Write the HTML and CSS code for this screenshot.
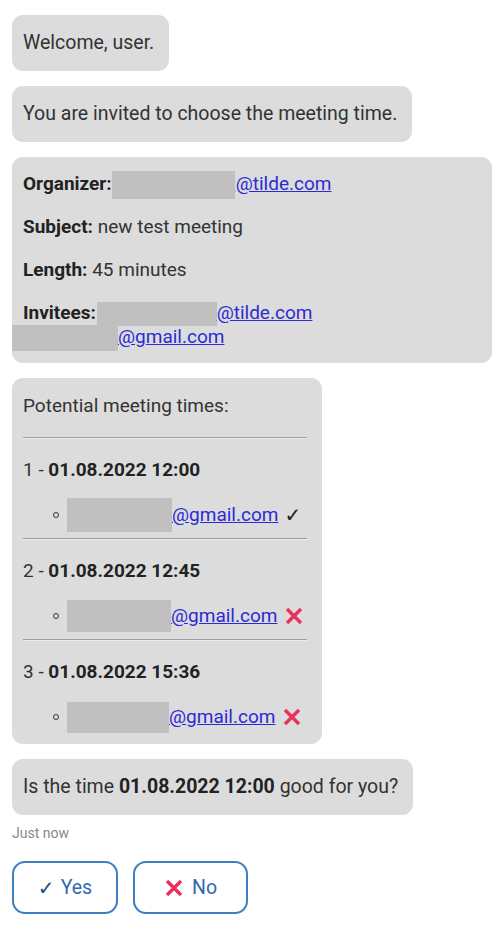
FILE: index.html
```html
<!DOCTYPE html>
<html>
<head>
<meta charset="utf-8">
<link rel="stylesheet" href="styles.css">
</head>
<body>
<div class="chat">
  <div class="bubble b-lg">Welcome, user.</div>
  <div class="bubble b-lg">You are invited to choose the meeting time.</div>
  <div class="bubble info">
    <p><b>Organizer:</b><span class="redact r-org"></span><a href="#">@tilde.com</a></p>
    <p><b>Subject:</b> new test meeting</p>
    <p><b>Length:</b> 45 minutes</p>
    <p><b>Invitees:</b> <span class="redact r-inv1"></span><a href="#">@tilde.com</a><br><span class="redact r-inv2"></span><a href="#">@gmail.com</a></p>
  </div>
  <div class="bubble times">
    <p class="head">Potential meeting times:</p>
    <hr>
    <p class="title">1 - <b>01.08.2022 12:00</b></p>
    <ul><li><span class="redact r-i1"></span><a href="#">@gmail.com</a><span class="ok">✓</span></li></ul>
    <hr>
    <p class="title">2 - <b>01.08.2022 12:45</b></p>
    <ul><li><span class="redact r-i2"></span><a href="#">@gmail.com</a><svg class="no" viewBox="0 0 20 20"><path d="M3 3 L17 17 M17 3 L3 17"/></svg></li></ul>
    <hr>
    <p class="title">3 - <b>01.08.2022 15:36</b></p>
    <ul><li><span class="redact r-i3"></span><a href="#">@gmail.com</a><svg class="no" viewBox="0 0 20 20"><path d="M3 3 L17 17 M17 3 L3 17"/></svg></li></ul>
  </div>
  <div class="bubble b-lg">Is the time <b>01.08.2022 12:00</b> good for you?</div>
  <div class="time">Just now</div>
  <div class="actions">
    <button class="btn btn-yes"><span class="chk">✓</span> Yes</button>
    <button class="btn btn-no"><svg class="no" viewBox="0 0 20 20"><path d="M3 3 L17 17 M17 3 L3 17"/></svg> No</button>
  </div>
</div>
</body>
</html>
```
FILE: styles.css
```css
html, body { margin: 0; padding: 0; background: #fff; }
body { font-family: Roboto, "Liberation Sans", sans-serif; color: #333; }
.chat { padding: 15px 0 0 12px; }
.bubble {
  background: #dcdcdc;
  border-radius: 11px;
  width: fit-content;
  margin-bottom: 15px;
  box-sizing: border-box;
}
.b-lg { font-size: 19.5px; line-height: 28px; padding: 14px 15px 14px 11px; }
.bubble b { font-weight: 700; color: #222; }
a { color: #2b2bd6; text-decoration: underline; }
.redact { display: inline-block; background: #c0c0c0; vertical-align: middle; }

.info { width: 480px; font-size: 19px; line-height: 24px; padding: 15px 11px 14px 11px; }
.info p { margin: 0 0 19px; }
.info p:last-child { margin-bottom: 0; }
.r-org { width: 123px; height: 28px; margin: -4px 1px -4px 0; }
.r-inv1 { width: 120px; height: 24px; margin: -2px 0 -2px -4px; }
.r-inv2 { width: 106px; height: 26px; margin: -2px 0 -2px -11px; }

.times { width: 310px; font-size: 19px; line-height: 24px; padding: 16px 15px 15px 11px; }
.times p { margin: 0; }
.times hr { border: none; border-top: 1px solid #9e9e9e; border-bottom: 1px solid #ececec; margin: 19px 0; height: 0; }
.times ul + hr { margin-top: 11px; }
.times ul { list-style: none; margin: 21px 0 0; padding: 0; }
.times li { display: flex; align-items: center; height: 24px; }
.times li::before {
  content: ""; width: 4px; height: 4px; border: 1.6px solid #333; border-radius: 50%;
  margin-left: 30px; margin-right: 8px; flex: none;
}
.r-i1 { width: 105px; height: 34px; }
.r-i2 { width: 104px; height: 32px; }
.r-i3 { width: 102px; height: 31px; }
.ok { margin-left: 6px; font-family: "DejaVu Sans", sans-serif; font-size: 20px; color: #222; }
.times .no { width: 20px; height: 20px; margin-left: 7px; }
.no path { stroke: #e8315b; stroke-width: 3.4; fill: none; stroke-linecap: butt; }

.time { font-size: 14px; color: #888; margin: -7px 0 0 0; height: 20px; line-height: 20px; }
.actions { display: flex; gap: 15px; margin-top: 18px; }
.btn {
  font-family: Roboto, "Liberation Sans", sans-serif;
  font-size: 19.5px; color: #2f6aae; background: #fff;
  border: 2px solid #3d7fc1; border-radius: 13px;
  height: 53px; display: flex; align-items: center; justify-content: center; gap: 6px;
  padding: 0; cursor: pointer;
}
.btn-yes { width: 106px; }
.btn-no { width: 115px; gap: 8px; }
.chk { font-family: "DejaVu Sans", sans-serif; font-size: 20px; color: #1f4e86; font-weight: bold; }
.btn .no { width: 20px; height: 20px; }
```
